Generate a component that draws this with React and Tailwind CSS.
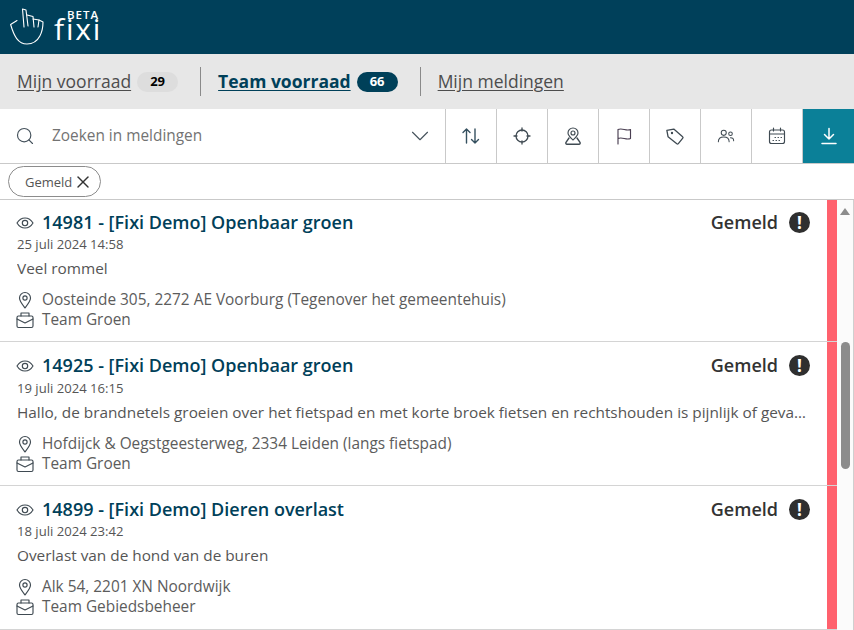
import React from "react";
import { ChevronDown, Search, X } from "lucide-react";

const meldingen = [
  {
    id: "14981 - [Fixi Demo] Openbaar groen",
    date: "25 juli 2024 14:58",
    text: "Veel rommel",
    address: "Oosteinde 305, 2272 AE Voorburg (Tegenover het gemeentehuis)",
    team: "Team Groen",
    cardClass: "h-[142px]",
    bodyClass: "pt-[9px]",
    dateClass: "-mt-[1px]",
  },
  {
    id: "14925 - [Fixi Demo] Openbaar groen",
    date: "19 juli 2024 16:15",
    text: "Hallo, de brandnetels groeien over het fietspad en met korte broek fietsen en rechtshouden is pijnlijk of gevaarlijk als je moet uitwijken",
    address: "Hofdijck & Oegstgeesterweg, 2334 Leiden (langs fietspad)",
    team: "Team Groen",
    cardClass: "h-[144px]",
    bodyClass: "pt-[10px]",
    dateClass: "mt-0",
  },
  {
    id: "14899 - [Fixi Demo] Dieren overlast",
    date: "18 juli 2024 23:42",
    text: "Overlast van de hond van de buren",
    address: "Alk 54, 2201 XN Noordwijk",
    team: "Team Gebiedsbeheer",
    cardClass: "h-[144px]",
    bodyClass: "pt-[10px]",
    dateClass: "-mt-[1px]",
  },
];

function Ico({ children, size = 20, stroke = "#3f4a52" }) {
  return (
    <svg width={size} height={size} viewBox="0 0 20 20" fill="none" stroke={stroke} strokeWidth="1.15" strokeLinecap="round" strokeLinejoin="round">
      {children}
    </svg>
  );
}

function Hand() {
  return (
    <svg width="36" height="38" viewBox="0 0 36 38" fill="none" stroke="#fff" strokeWidth="1.1" strokeLinecap="round" strokeLinejoin="round">
      <path d="M14 19L12.500 1l3.500 1 2 16" />
      <path d="M17 7l6 1.500 1 10.500" />
      <path d="M23 11l6 1-1 7" />
      <path d="M29 12l4 2c0 8-3 22-16 22C8 36 4 28 .6 16.500L7 12.500" />
    </svg>
  );
}

function Melding({ item }) {
  return (
    <div className={`flex border-b border-[#d4d4d4] ${item.cardClass}`}>
      <div className={`min-w-0 flex-1 pl-[17px] pr-[17px] ${item.bodyClass}`}>
        <div className="flex items-center justify-between">
          <div className="flex h-[26px] items-center gap-[7px]">
            <span className="-ml-[2px]">
              <Ico>
                <path d="M2 10c2-3.300 4.800-5 8-5s6 1.700 8 5c-2 3.300-4.800 5-8 5s-6-1.700-8-5z" />
                <circle cx="10" cy="10" r="2.700" />
              </Ico>
            </span>
            <span className="text-[18px] font-semibold text-[#004059]">{item.id}</span>
          </div>
          <div className="flex items-center gap-[11px]">
            <span className="text-[18px] font-semibold text-[#333]">Gemeld</span>
            <span className="flex h-[21px] w-[21px] items-center justify-center rounded-full bg-[#2f2f2f] text-[17px] font-bold text-white">!</span>
          </div>
        </div>
        <div className={`text-[13.100px] leading-[18px] text-[#555] ${item.dateClass}`}>{item.date}</div>
        <div className="mt-[3px] truncate text-[15.350px] leading-[24px] text-[#555]">{item.text}</div>
        <div className="mt-[10px] -ml-[2px] flex h-[20px] items-center gap-[7px] text-[15.400px] text-[#5c5c5c]">
          <Ico>
            <path d="M10 18c-3-4-5.500-7-5.500-10a5.500 5.500 0 0 1 11 0c0 3-2.500 6-5.500 10z" />
            <circle cx="10" cy="8" r="2.100" />
          </Ico>
          <span>{item.address}</span>
        </div>
        <div className="-ml-[2px] flex h-[20px] items-center gap-[7px] text-[15.400px] text-[#5c5c5c]">
          <Ico>
            <rect x="2" y="6" width="16" height="11.500" rx="1.500" />
            <path d="M2 9l8 4 8-4M6 6V3h8v3" />
          </Ico>
          <span>{item.team}</span>
        </div>
      </div>
      <div className="w-[10px] shrink-0 bg-[#ff616d]" />
    </div>
  );
}

const toolIcons = [
  <Ico key="sort" stroke="#35505f"><path d="M5.500 17V3M2 6.500L5.500 3 9 6.500M14 3v14M10.500 13.500L14 17l3.500-3.500" strokeWidth="1.400" /></Ico>,
  <Ico key="target"><circle cx="10" cy="10" r="6" strokeWidth="1.300" /><path d="M10 2v3M10 15v3M2 10h3M15 10h3" strokeWidth="1.300" /></Ico>,
  <Ico key="pin">
    <path d="M10 14c-2.800-2.600-5-4.500-5-7a5 5 0 0 1 10 0c0 2.500-2.200 4.400-5 7z" />
    <circle cx="10" cy="7" r="2" />
    <path d="M6 12l-3 4.300c-.5 1 0 1.900 1 1.900h12c1 0 1.500-.9 1-1.900L14 12" strokeWidth="1.400" />
  </Ico>,
  <Ico key="flag"><path d="M4 18V3.500c4.500-2 8 2 12.500 0v9c-4.500 2-8-2-12.500 0" stroke="#4a3f52" /></Ico>,
  <Ico key="tag"><path d="M2.500 3.500l7-.5 8 8.500c.5.500.5 1 0 1.500l-5 5c-.5.500-1 .5-1.500 0L3 10z" transform="rotate(-6 10 10)" strokeWidth="1.300" /><circle cx="7" cy="7" r=".6" /></Ico>,
  <Ico key="users" size={18}><circle cx="7.500" cy="6.500" r="2.800" /><path d="M1.500 16.500c0-3.500 2.500-5.500 6-5.500s6 2 6 5.500" /><circle cx="15" cy="7.500" r="2" /><path d="M15 12c2.200 0 3.500 1.200 3.500 3.200" /></Ico>,
  <Ico key="cal"><rect x="2.500" y="4" width="15" height="13.500" rx="2" /><path d="M2.500 8h15M6.500 2v3M13.500 2v3M8 11.500h.5M11 11.500h.5M14 11.500h.5M6 14.500h.5M9 14.500h.5M12 14.500h.5" /></Ico>,
];

export default function App() {
  return (
    <div className="flex h-[630px] w-[854px] flex-col overflow-hidden bg-white font-['Open_Sans',sans-serif]">
      <header className="flex h-[54px] shrink-0 items-start gap-[8px] bg-[#00405a] pl-[10px] pt-[8px]">
        <Hand />
        <div className="flex w-[46px] flex-col pt-[2px] text-white">
          <span className="mr-[1px] h-[9px] self-end text-[11.500px] font-semibold leading-[9px] tracking-[1px]">BETA</span>
          <span className="-mt-[1px] h-[22px] text-[30px] font-medium leading-[22px] tracking-[1.800px]">fixi</span>
        </div>
      </header>

      <nav className="flex h-[55px] shrink-0 items-center bg-[#e7e7e7] pl-[17px] text-[17.500px]">
        <a className="text-[#4d4d4d] underline underline-offset-2">Mijn voorraad</a>
        <span className="ml-[6px] flex h-[20px] w-[41px] items-center justify-center rounded-full bg-[#dddddd] text-[13px] font-bold text-black">29</span>
        <span className="ml-[22px] mr-[17px] h-[29px] w-px bg-[#8a8a8a]" />
        <a className="font-bold text-[#004059] underline underline-offset-2">Team voorraad</a>
        <span className="ml-[6px] flex h-[20px] w-[41px] items-center justify-center rounded-full bg-[#004059] text-[13px] font-bold text-white">66</span>
        <span className="ml-[22px] mr-[17px] h-[29px] w-px bg-[#8a8a8a]" />
        <a className="text-[#4d4d4d] underline underline-offset-2">Mijn meldingen</a>
      </nav>

      <div className="flex h-[55px] shrink-0 border-b border-[#c9c9c9]">
        <div className="flex flex-1 items-center pl-[15px] pr-[10px]">
          <Search size={20} color="#45525c" strokeWidth={1.4} />
          <span className="ml-[17px] flex-1 text-[15.400px] text-[#737373]">Zoeken in meldingen</span>
          <ChevronDown size={30} color="#45525c" strokeWidth={0.9} />
        </div>
        {toolIcons.map((icon, i) => (
          <button key={i} className="flex w-[51px] items-center justify-center border-l border-[#c9c9c9]">
            {icon}
          </button>
        ))}
        <button className="flex w-[52px] items-center justify-center border-l border-[#c9c9c9] bg-[#0b8098]">
          <Ico stroke="#fff"><path d="M10 2.500V13M5.500 8.500L10 13l4.500-4.500M3 17.500h14" strokeWidth="1.500" /></Ico>
        </button>
      </div>

      <div className="flex h-[36px] shrink-0 items-center border-b border-[#c9c9c9] pl-[8px]">
        <span className="flex h-[31px] w-[93px] items-center gap-[1px] rounded-full border border-[#8c8c8c] pl-[16px] text-[13px] text-[#555]">
          <span className="pt-[2px]">Gemeld</span>
          <X size={20} color="#333" strokeWidth={1.7} />
        </span>
      </div>

      <div className="flex min-h-0 flex-1">
        <div className="min-w-0 flex-1">
          {meldingen.map((m) => (
            <Melding key={m.id} item={m} />
          ))}
        </div>
        <div className="flex w-[17px] shrink-0 flex-col items-center border-r border-[#cfcfcf] bg-[#fbfbfb] pt-[8px]">
          <span className="h-0 w-0 border-x-[5px] border-b-[7px] border-x-transparent border-b-[#8c8c8c]" />
          <span className="mt-[127px] h-[127px] w-[9px] rounded-full bg-[#8c8c8c]" />
        </div>
      </div>
    </div>
  );
}
